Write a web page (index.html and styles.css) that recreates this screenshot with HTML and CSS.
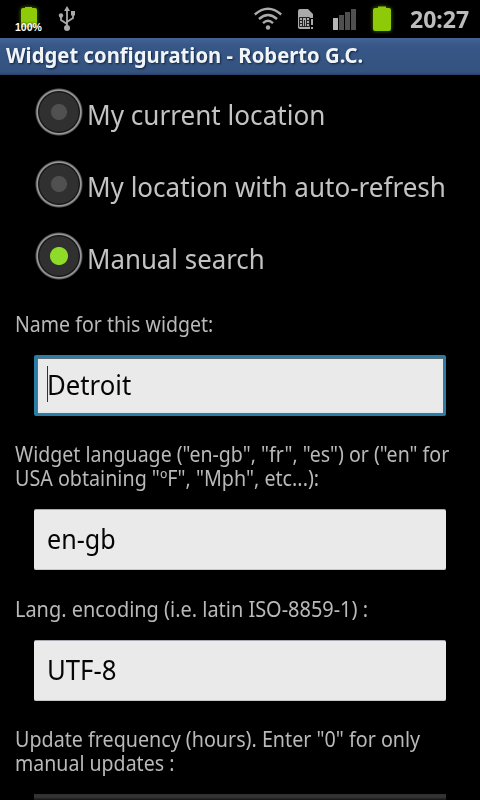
FILE: index.html
```html
<!DOCTYPE html>
<html lang="en">
<head>
<meta charset="utf-8">
<title>Widget configuration</title>
<link rel="stylesheet" href="styles.css">
</head>
<body>
<header class="status">
  <div class="battery-note">
    <svg width="28" height="34" viewBox="0 0 28 34"><path class="glow" d="M6 9q0-2 2-2h2V6h7v1h3q2 0 2 2v17H6z"/></svg>
    <span class="percent">100%</span>
  </div>
  <svg class="usb" width="18" height="28" viewBox="0 0 18 28"><g fill="none" stroke="#aaa" stroke-width="1.800"><path d="M9 4v19M9 19l-6-4v-5M9 17l6-4V9"/></g><g fill="#aaa"><path d="M9 1l3 5H6z"/><circle cx="9" cy="23" r="3"/><circle cx="3" cy="10.500" r="2.200"/><path d="M13 6h4v4.500h-4z"/></g></svg>
  <svg class="wifi" width="28" height="24" viewBox="0 0 28 24"><g fill="none" stroke="#aaa" stroke-width="2.400"><path d="M.8 7.500Q14-4 27.200 7.500M5 12Q14 4 23 12M9 16.200Q14 11.500 19 16.200"/></g><circle cx="14" cy="20.500" r="2.200" fill="#aaa"/></svg>
  <svg class="sim" width="16" height="22" viewBox="0 0 16 22"><path d="M0 2q0-2 2-2h8l5 5v4h-3v11H2q-2 0-2-2z" fill="#aaa"/><path d="M1.500 8.500h10v9h-10zM4.500 8v9M8.500 8v9M6.500 11v6M2 11.500h3M8 11.500h3M2 14.500h3M8 14.500h3" fill="none" stroke="#222"/><path d="M13 10h2v6h-2zM13 18h2v2h-2z" fill="#aaa"/></svg>
  <svg class="signal" width="24" height="22" viewBox="0 0 24 22"><path d="M0 9h5v12H0z" fill="#b5b5b5"/><path d="M6 6h5v15H6zM12 3h5v18h-5zM18 0h5v21h-5z" fill="#4f4f4f"/></svg>
  <svg class="charge" width="28" height="34" viewBox="0 0 28 34"><path class="glow" d="M5 10q0-2 2-2h3V6.500h8V8h3q2 0 2 2v19q0 2-2 2H7q-2 0-2-2z"/></svg>
  <span class="clock">20:27</span>
</header>
<div class="titlebar"><span class="fit fit-title">Widget configuration - Roberto G.C.</span></div>
<main class="form">
  <div class="radios">
    <div class="option"><i class="radio"></i><span class="fit fit-r1">My current location</span></div>
    <div class="option"><i class="radio"></i><span class="fit fit-r2">My location with auto-refresh</span></div>
    <div class="option"><i class="radio on"></i><span class="fit fit-r3">Manual search</span></div>
  </div>
  <div class="label"><span class="fit fit-name">Name for this widget:</span></div>
  <div class="field focused"><i class="caret"></i><span class="fit fit-detroit">Detroit</span></div>
  <div class="label"><span class="fit fit-lang1">Widget language ("en-gb", "fr", "es") or ("en" for</span><span class="fit fit-lang2">USA obtaining "ºF", "Mph", etc...):</span></div>
  <div class="field"><span class="fit fit-gb">en-gb</span></div>
  <div class="label lower"><span class="fit fit-enc">Lang. encoding (i.e. latin ISO-8859-1) :</span></div>
  <div class="field"><span class="fit fit-utf">UTF-8</span></div>
  <div class="label"><span class="fit fit-up1">Update frequency (hours). Enter "0" for only</span><span class="fit fit-up2">manual updates :</span></div>
  <div class="next-field"></div>
</main>
</body>
</html>
```

FILE: styles.css
```css
* { box-sizing: border-box; }
body { margin: 0; width: 480px; height: 800px; overflow: hidden; background: #000; color: #c3c3c3; font-family: "Noto Sans", "Open Sans", sans-serif; }
svg { display: block; flex: none; }
.status { height: 38px; display: flex; align-items: flex-start; background: #000; }
.battery-note { position: relative; margin-left: 15px; width: 28px; margin-top: 1px; }
.percent { position: absolute; left: 0; top: 20px; font: bold 10.500px/12px "Liberation Sans", sans-serif; color: #fff; text-shadow: 0 0 2px #000; }
.glow { fill: #8fca08; filter: drop-shadow(0 0 2px #4c7000); }
.usb { margin: 5px 0 0 15px; }
.wifi { margin: 7px 0 0 178px; }
.sim { margin: 9px 0 0 16px; }
.signal { margin: 9px 0 0 19px; }
.charge { margin-left: 11px; }
.clock { margin: 6px 0 0 14px; font-size: 23.500px; line-height: 26px; font-weight: 700; color: #bcbcbc; transform: scaleX(.98); transform-origin: 0 0; white-space: nowrap; }
.titlebar { height: 37px; padding: 5px 0 0 6px; background: linear-gradient(#426494, #375787 20%, #34537f 92%, #2a416a); color: #f1f5f8; font-size: 21px; font-weight: 700; line-height: 24px; text-shadow: 1px 1px 2px #10233f; }
.fit { display: block; width: max-content; white-space: nowrap; transform: scaleX(.94); transform-origin: 0 0; }
.fit-title { transform: scaleX(.966); }
.fit-r1 { transform: scaleX(.967); }
.fit-r2 { transform: scaleX(.964); }
.fit-r3 { transform: scaleX(.957); }
.fit-name, .fit-lang1, .fit-up2, .fit-gb { transform: scaleX(.931); }
.fit-lang2, .fit-up1 { transform: scaleX(.938); }
.fit-enc { transform: scaleX(.949); }
.fit-utf, .fit-detroit { transform: scaleX(.953); }
.radios { padding: 1px 0 0 35px; height: 225px; }
.option { display: flex; height: 72px; align-items: flex-start; font-size: 27px; line-height: 36px; }
.option .fit { margin: 21px 0 0 4px; }
.radio { flex: none; width: 48px; height: 48px; margin-top: 12px; background: radial-gradient(circle at 24px 24px, #505050 0 7.500px, #303030 8.500px 19px, #1b1b1b 20px 20.500px, #999 21.500px 22px, #555 23px, transparent 24px); }
.radio.on { background: radial-gradient(circle at 24px 24px, #8edc28 0 8.500px, #303030 9.500px 19px, #1b1b1b 20px 20.500px, #999 21.500px 22px, #555 23px, transparent 24px); }
.label { padding: 0 15px; margin-top: 26px; font-size: 21px; line-height: 24px; color: #b9b9b9; }
.label.lower { margin-top: 27px; }
.radios + .label { margin-top: 12px; }
.field { position: relative; margin: 19px 34px 0; height: 61px; padding: 11px 0 0 13px; border-top: 1px solid #aaaab0; border-bottom: 1px solid #c8c8cc; border-radius: 2px; background: #eaeaea; color: #050505; font-size: 27px; line-height: 36px; }
.field.focused { padding: 9px 0 0 10px; border: 3px solid #2b7da5; box-shadow: inset 1px 1px #60717b, inset 0 -2px #dceaf0; }
.caret { position: absolute; left: 10px; top: 8px; width: 1px; height: 36px; background: #333; }
.next-field { height: 8px; margin: 19px 34px 0; background: linear-gradient(#303030, #353535 3px, #151515 6px); }
```
